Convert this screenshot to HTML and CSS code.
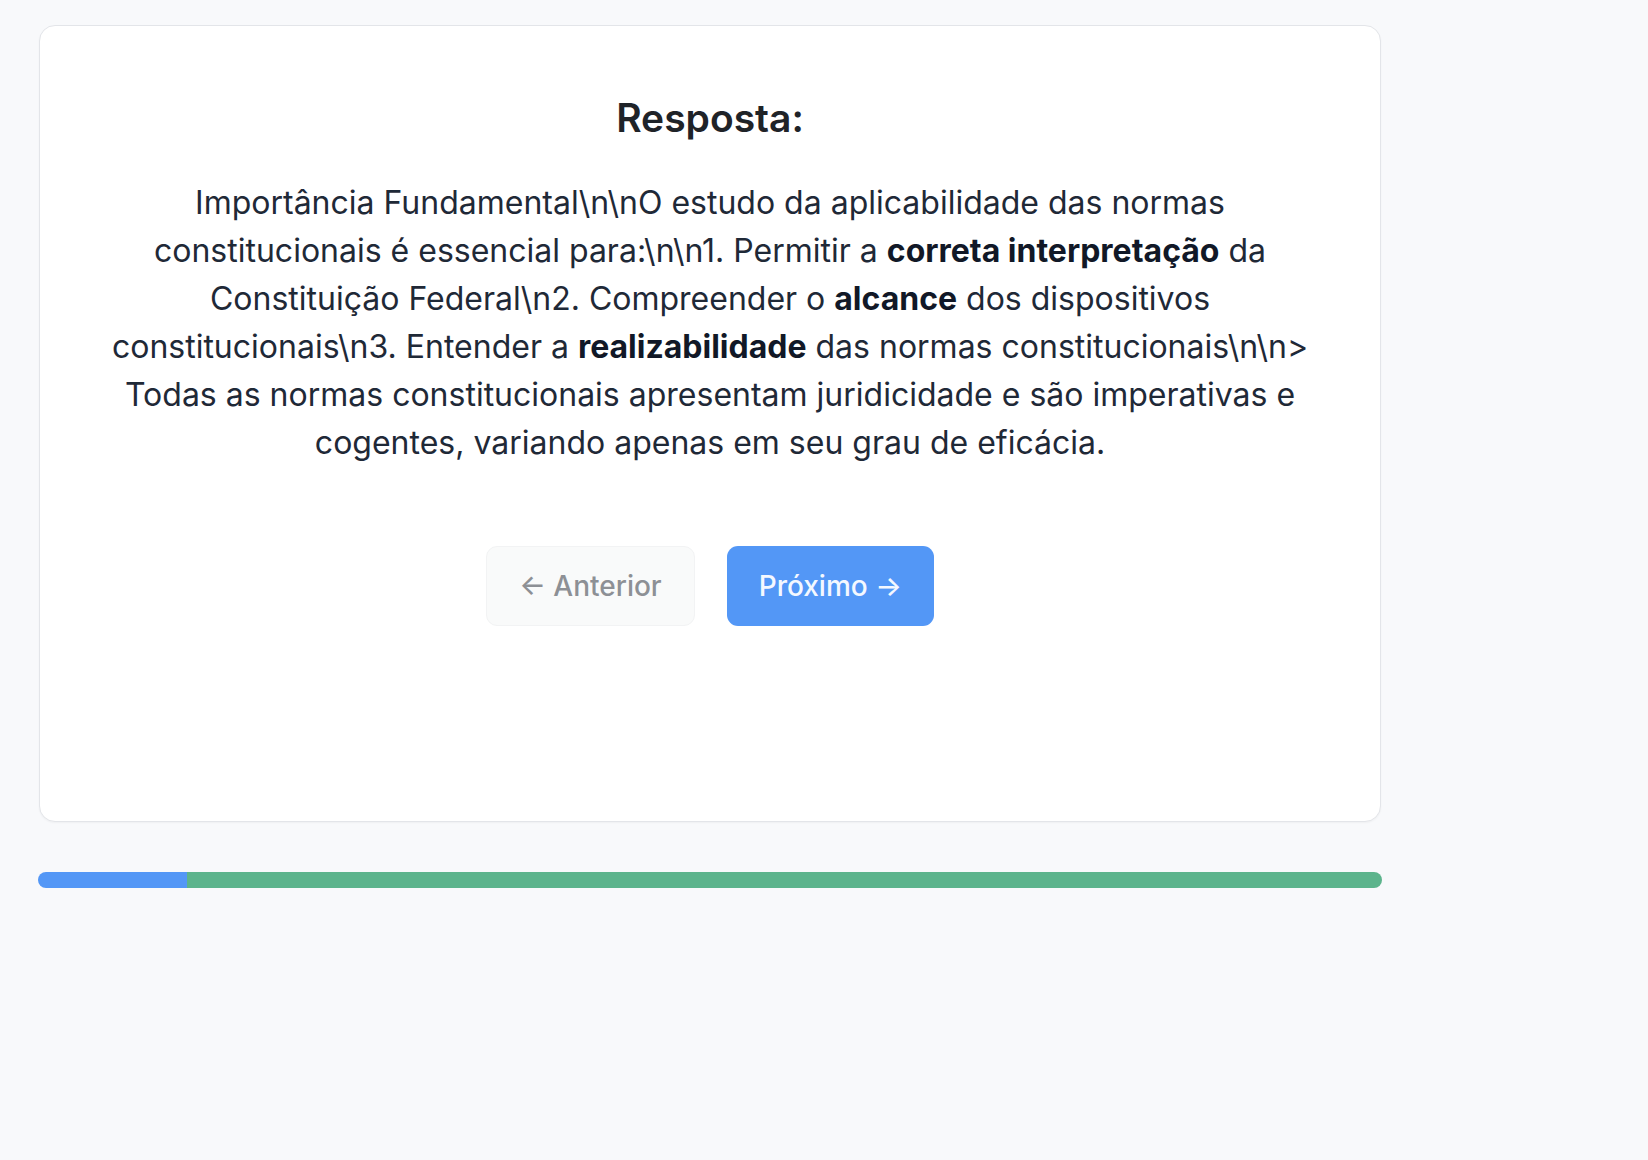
FILE: index.html
```html
<!DOCTYPE html>
<html lang="pt-BR">
<head>
<meta charset="utf-8">
<title>Resposta</title>
<link rel="stylesheet" href="styles.css">
</head>
<body>
<main class="page">
  <section class="card">
    <h2 class="title">Resposta:</h2>
    <p class="answer">Importância Fundamental\n\nO estudo da aplicabilidade das normas constitucionais é essencial para:\n\n1. Permitir a <strong>correta interpretação</strong> da Constituição Federal\n2. Compreender o <strong>alcance</strong> dos dispositivos constitucionais\n3. Entender a <strong>realizabilidade</strong> das normas constitucionais\n\n&gt; Todas as normas constitucionais apresentam juridicidade e são imperativas e cogentes, variando apenas em seu grau de eficácia.</p>
    <div class="actions">
      <button class="btn btn-prev" disabled>← Anterior</button>
      <button class="btn btn-next">Próximo →</button>
    </div>
  </section>
  <div class="progress">
    <div class="progress-done" style="width: 11.11%"></div>
    <div class="progress-rest"></div>
  </div>
</main>
</body>
</html>
```

FILE: styles.css
```css
* { box-sizing: border-box; }

html, body {
  margin: 0;
  padding: 0;
  background: #f8f9fb;
  font-family: Inter, "Noto Sans", "Liberation Sans", sans-serif;
  color: #1f2937;
}

.page {
  width: 1344px;
  margin-left: 38px;
  padding-top: 25px;
}

.card {
  height: 797px;
  margin: 0 1px;
  background: #ffffff;
  border: 1.5px solid #e3e5e9;
  border-radius: 16px;
  box-shadow: 0 1px 2px rgba(0, 0, 0, 0.04);
  padding: 68px 63px 0;
  text-align: center;
}

.title {
  margin: 0;
  font-size: 39px;
  line-height: 47px;
  font-weight: 600;
  color: #1f2328;
}

.answer {
  margin: 38px 0 0;
  font-size: 32px;
  line-height: 48px;
  font-weight: 400;
  color: #1f2937;
}

.answer strong {
  font-weight: 700;
  color: #111827;
}

.actions {
  display: flex;
  justify-content: center;
  gap: 32px;
  margin-top: 79px;
}

.btn {
  height: 80px;
  padding: 0 32px;
  border-radius: 11px;
  font-family: inherit;
  font-size: 28px;
  font-weight: 500;
  border: none;
  cursor: pointer;
}

.btn-prev {
  background: #f9fafa;
  color: #8d9095;
  border: 1px solid #f2f3f4;
  cursor: default;
}

.btn-next {
  background: #5397f6;
  color: #f4f8ff;
}

.progress {
  display: flex;
  height: 16px;
  margin-top: 50px;
  border-radius: 8px;
  overflow: hidden;
}

.progress-done {
  background: #5397f6;
}

.progress-rest {
  flex: 1;
  background: #5cb48c;
}
```
